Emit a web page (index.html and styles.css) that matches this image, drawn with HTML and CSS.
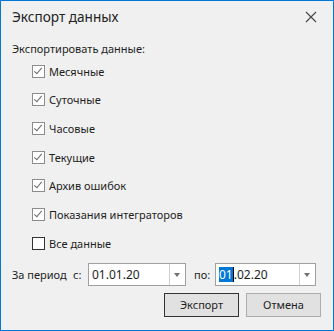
FILE: index.html
```html
<!DOCTYPE html>
<html lang="ru">
<head>
	<meta charset="UTF-8">
	<title>Экспорт данных</title>
	<link rel="stylesheet" href="styles.css">
</head>
<body>
	<div class="dialog">
		<div class="titlebar">
			<div class="title">Экспорт данных</div>
			<svg class="close" width="12" height="12" viewBox="0 0 12 12">
				<path d="M1 1 L11 11 M11 1 L1 11" stroke="#444" stroke-width="1.1" fill="none"/>
			</svg>
		</div>
		<div class="content">
			<div class="caption">Экспортировать данные:</div>
			<ul class="options">
				<li><span class="check on"></span>Месячные</li>
				<li><span class="check on"></span>Суточные</li>
				<li><span class="check on"></span>Часовые</li>
				<li><span class="check on"></span>Текущие</li>
				<li><span class="check on"></span>Архив ошибок</li>
				<li><span class="check on"></span>Показания интеграторов</li>
				<li><span class="check"></span>Все данные</li>
			</ul>
			<div class="period">
				<span class="lbl-period">За период</span>
				<span class="lbl-from">с:</span>
				<div class="combo combo-from">
					<span class="value">01.01.20</span>
					<span class="arrow"></span>
				</div>
				<span class="lbl-to">по:</span>
				<div class="combo combo-to">
					<span class="value"><span class="sel">01</span><span class="caret"></span>.02.20</span>
					<span class="arrow"></span>
				</div>
			</div>
			<div class="buttons">
				<div class="btn default">Экспорт</div>
				<div class="btn">Отмена</div>
			</div>
		</div>
	</div>
</body>
</html>
```

FILE: styles.css
```css
*{
	padding: 0;
	margin: 0;
	box-sizing: border-box;
}
body{
	font-family: "Noto Sans", "Open Sans", sans-serif;
	font-size: 11px;
	color: #1e1e1e;
	background: #f0f0f0;
}
.dialog{
	width: 334px;
	height: 331px;
	border: 1px solid #0078d7;
	background: #f0f0f0;
	display: flex;
	flex-direction: column;
}
.titlebar{
	height: 31px;
	display: flex;
	align-items: center;
	justify-content: space-between;
	padding: 0 16px 0 11px;
}
.title{
	font-size: 13.6px;
	color: #222;
}
.close{
	display: block;
}
.content{
	padding-left: 11px;
}
.caption{
	margin-top: 9px;
	line-height: 16px;
}
.options{
	list-style: none;
	padding-left: 20px;
}
.options li{
	height: 28.67px;
	display: flex;
	align-items: center;
}
.check{
	width: 13px;
	height: 13px;
	border: 1px solid #333;
	background: #fff;
	margin-right: 4px;
	position: relative;
}
.check.on{
	border-color: #8c8c8c;
}
.check.on::after{
	content: "";
	position: absolute;
	left: 3px;
	top: 0px;
	width: 3px;
	height: 7px;
	border: solid #666;
	border-width: 0 1px 1px 0;
	transform: rotate(40deg);
}
.period{
	margin-top: 5px;
	display: flex;
	align-items: center;
	height: 23px;
}
.lbl-period{
	width: 61px;
}
.lbl-from{
	width: 15px;
}
.lbl-to{
	width: 29px;
	padding-left: 8px;
}
.combo{
	height: 23px;
	border: 1px solid #a0a0a0;
	background: #fff;
	display: flex;
	align-items: center;
}
.combo-from{
	width: 98px;
}
.combo-to{
	width: 101px;
}
.value{
	flex: 1;
	padding-left: 3px;
	display: flex;
	align-items: center;
	font-size: 12px;
}
.sel{
	background: #0078d7;
	color: #fff;
	line-height: 15px;
}
.caret{
	width: 1px;
	height: 15px;
	background: #000;
}
.arrow{
	width: 16px;
	height: 21px;
	border-left: 1px solid #d0d0d0;
	position: relative;
}
.arrow::after{
	content: "";
	position: absolute;
	left: 4px;
	top: 9px;
	border-left: 3.5px solid transparent;
	border-right: 3.5px solid transparent;
	border-top: 4px solid #707070;
}
.buttons{
	margin-top: 7px;
	display: flex;
	justify-content: flex-end;
	gap: 7px;
	padding-right: 12px;
}
.btn{
	width: 75px;
	height: 24px;
	border: 1px solid #adadad;
	background: #e1e1e1;
	display: flex;
	align-items: center;
	justify-content: center;
}
.btn.default{
	border: 1px solid #333;
}
```
